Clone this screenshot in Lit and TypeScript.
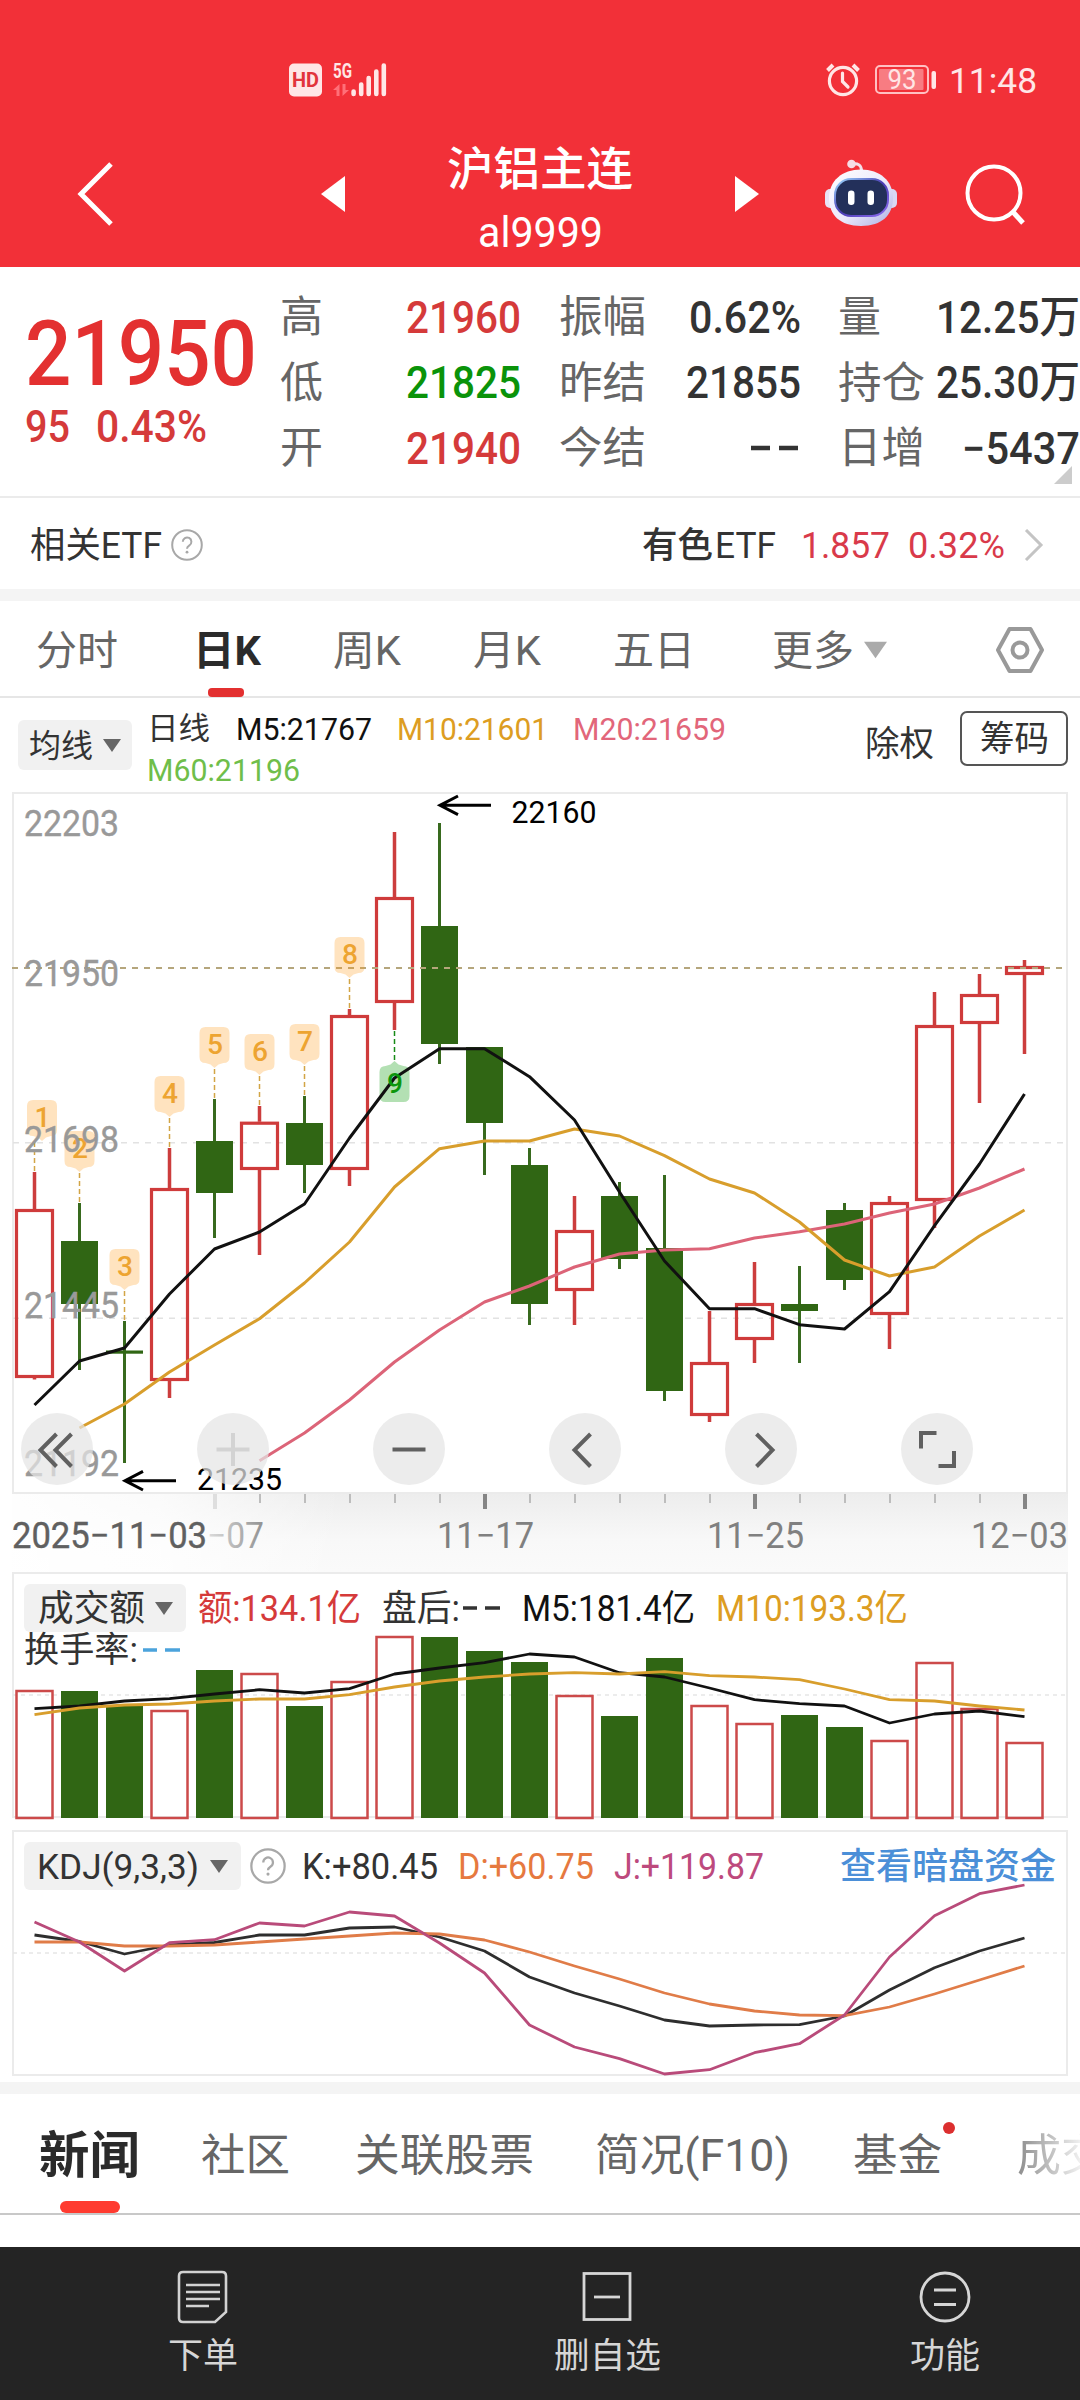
import { LitElement, html, svg, css } from "lit";
import { customElement } from "lit/decorators.js";

/** Fixed-width text run: real text squeezed or stretched to the width of the app's DIN-like face. */
const fit = (text: string, width: number, size: number, cls = "") => {
  const h = Math.round(size * 0.72);
  return html`<svg class="fit ${cls}" width=${width} height=${h} viewBox="0 0 ${width} ${h}">
    <text x="0" y=${h} font-size=${size} textLength=${width} lengthAdjust="spacingAndGlyphs" xml:space="preserve">${text}</text>
  </svg>`;
};

const label = (text: string, x: number, base: number, width: number, size: number, cls = "") => svg`
  <text class=${cls} x=${x} y=${base} font-size=${size} textLength=${width} lengthAdjust="spacingAndGlyphs">${text}</text>`;

const X0 = 34.5;
const STEP = 45;
const cx = (i: number) => X0 + STEP * i;
const line = (ys: number[], from = 0) => ys.map((y, i) => `${cx(i + from)},${y}`).join(" ");

// [direction, high, body top, body bottom, low] in canvas units
type Candle = [string, number, number, number, number];
const candles: Candle[] = [
  ["r", 1172, 1209, 1378, 1379.5], ["g", 1203, 1241, 1304, 1370], ["g", 1321, 1350.5, 1353.7, 1463],
  ["r", 1148, 1188, 1381, 1398], ["g", 1099, 1141, 1193, 1238], ["r", 1106, 1121.7, 1170, 1255],
  ["g", 1096, 1123, 1165, 1193], ["r", 1009, 1015, 1170, 1186], ["r", 832, 897, 1003, 1030],
  ["g", 823, 926, 1044, 1064], ["g", 1047, 1047, 1123, 1175], ["g", 1148, 1165, 1304, 1325],
  ["r", 1196, 1230, 1291, 1325], ["g", 1182, 1196, 1259, 1269], ["g", 1175, 1248, 1391, 1401],
  ["r", 1311, 1362, 1416, 1422], ["r", 1262, 1303, 1340, 1363], ["g", 1266, 1304, 1311, 1363],
  ["g", 1203, 1210, 1280, 1290], ["r", 1196, 1202, 1315, 1349], ["r", 992, 1025, 1201, 1228],
  ["r", 974, 994, 1024, 1103], ["r", 960, 966, 975, 1054],
];
const ma5 = [1405, 1361, 1348, 1294, 1249, 1232, 1204, 1138, 1078, 1048.7, 1048.7, 1076.7, 1120, 1192, 1261, 1308.7, 1308.7, 1324.7, 1329, 1291.7, 1225.7, 1164, 1094];
const ma10 = [1428, 1404, 1372, 1345, 1318.7, 1283, 1242, 1187, 1148.7, 1141, 1141, 1129, 1136, 1155.7, 1179, 1193, 1222, 1260, 1276, 1267, 1236, 1210];
const ma20 = [1460.7, 1433, 1400, 1362, 1330, 1302, 1286, 1267, 1254, 1250, 1248.7, 1238, 1231.7, 1224, 1213, 1204, 1188, 1169];

const volTops = [1690, 1691, 1705.5, 1710, 1670, 1673, 1706, 1681, 1636, 1637, 1651, 1662, 1695, 1716, 1658, 1705, 1723, 1715, 1727, 1740, 1662, 1708, 1742];
const vol5 = [1708.7, 1706, 1701, 1698.7, 1694, 1689.7, 1693, 1688.7, 1674, 1668, 1662.7, 1654, 1657, 1672.7, 1677, 1688, 1699.7, 1703.7, 1706, 1723, 1714, 1711, 1716.7];
const vol10 = [1714.7, 1708, 1705, 1704, 1701, 1699, 1699, 1694.7, 1687, 1681, 1677, 1674, 1672.7, 1674, 1671.7, 1675.7, 1677, 1679.7, 1689, 1699.7, 1701, 1706, 1710];

const kLine = [1935, 1941.5, 1954, 1945, 1942.5, 1935, 1935, 1928, 1927, 1937, 1951, 1977, 1993, 2006, 2020, 2026, 2025, 2024.7, 2016, 1990, 1967.7, 1951, 1938];
const dLine = [1942, 1942, 1946, 1946, 1945, 1942, 1939, 1936, 1933, 1934, 1940, 1952, 1966, 1979, 1993, 2004, 2011, 2015, 2015.7, 2007, 1994, 1980, 1966];
const jLine = [1922, 1942, 1971, 1942.7, 1939.7, 1923, 1926, 1912, 1916, 1943, 1973, 2025, 2047, 2058.7, 2074, 2069.7, 2052.7, 2043.7, 2015, 1957, 1915.7, 1893.7, 1885];

const caret = (w = 18, h = 13) => html`<svg class="caret" width=${w} height=${h} viewBox="0 0 18 13"><path d="M0 0H18L9 13Z" fill="currentColor" /></svg>`;
const help = (d: number) => html`<svg class="help" width=${d} height=${d} viewBox="0 0 32 32">
  <circle cx="16" cy="16" r="14.8" fill="none" stroke="#a8a8a8" stroke-width="2" />
  <path d="M11.8 12.8a4.3 4.3 0 1 1 6.6 3.6c-1.6 1-2.4 1.6-2.4 3.4" fill="none" stroke="#a8a8a8" stroke-width="2" />
  <circle cx="16" cy="23.2" r="1.4" fill="#a8a8a8" />
</svg>`;

const shared = css`
  :host { display: block; font-family: Roboto, "Noto Sans CJK SC", sans-serif; color: #333; }
  svg { display: block; flex: none; }
  .fit { overflow: visible; fill: currentColor; }
  .b { font-weight: 700; }
  .m { font-weight: 500; }
  .red { color: #d53a3a; }
  .green { color: #0a930a; }
  .gray { color: #666; }
  .black { color: #111; }
  .gold { color: #dd9d22; }
  .pink { color: #e2667a; }
  .lime { color: #6fbe4a; }
`;

@customElement("app-header")
class AppHeader extends LitElement {
  static styles = [shared, css`
    :host { background: #f23038; color: #fff; height: 267px; }
    .status { height: 160px; padding: 0 43px 0 289px; display: flex; align-items: center; color: #ffe6e6; box-sizing: border-box; }
    .spacer { flex: 1; }
    .signal { margin-left: 11px; overflow: visible; }
    .battery { margin: 0 13px 0 15px; }
    .nav { height: 107px; margin-top: -20px; display: grid; grid-template-columns: 77px 244px 103px 232px 79px 88px 141px auto; align-items: center; }
    .titles { display: flex; flex-direction: column; align-items: center; gap: 32px; padding-top: 12px; justify-self: center; }
    .back { grid-column: 2; }
  `];
  render() {
    return html`
      <div class="status">
        <svg width="33" height="34" viewBox="0 0 33 34">
          <rect x="0" y="0.5" width="33" height="33" rx="5" fill="#ffe6e6" />
          <text x="3" y="24" font-size="20" font-weight="700" fill="#e2343b" textLength="27" lengthAdjust="spacingAndGlyphs">HD</text>
        </svg>
        <svg class="signal" width="54" height="34" viewBox="333 63 54 34">
          <text x="333" y="77.5" font-size="20" font-weight="700" fill="#ffe6e6" textLength="19" lengthAdjust="spacingAndGlyphs">5G</text>
          <path d="M339.500 84V96H336.500V90H333ZM342.500 96V84H345.500V90H349Z" fill="#ff7078" />
          <g stroke="#ffe6e6" stroke-width="4.6" stroke-linecap="round">
            <path d="M353.600 91.500V94M361.200 84.500V94M368.700 78V94M376.300 71.500V94M383.800 65.500V94" />
          </g>
        </svg>
        <div class="spacer"></div>
        <svg width="34" height="34" viewBox="0 0 34 34" fill="none" stroke="#ffe6e6" stroke-width="3.2">
          <circle cx="17" cy="18" r="13.600" />
          <path d="M16.500 10V18.500L22 24" stroke-linecap="round" />
          <path d="M1.500 7.500 7 2M32.500 7.500 27 2" stroke-width="4" />
        </svg>
        <svg class="battery" width="61" height="30" viewBox="0 0 61 30">
          <rect x="1" y="1" width="52" height="27" rx="4" fill="none" stroke="#ffc0c2" stroke-width="2" />
          <rect x="4" y="4" width="44.500" height="21" rx="1" fill="#f87c82" />
          <rect x="56.500" y="6" width="4.500" height="18" rx="2" fill="#ffe6e6" />
          <text x="12.500" y="24.200" font-size="27" fill="#ffe6e6" textLength="29" lengthAdjust="spacingAndGlyphs">93</text>
        </svg>
        ${fit("11:48", 88, 35)}
      </div>
      <div class="nav">
        <svg class="back" width="36" height="64" viewBox="0 0 36 64"><path d="M34 2 4 32 34 62" fill="none" stroke="#fff" stroke-width="5" /></svg>
        <svg width="24" height="36" viewBox="0 0 24 36"><path d="M24 0V36L0 18Z" fill="#fff" /></svg>
        <div class="titles">${fit("沪铝主连", 186, 46, "m")}${fit("al9999", 125, 42)}</div>
        <div></div>
        <svg width="24" height="36" viewBox="0 0 24 36"><path d="M0 0V36L24 18Z" fill="#fff" /></svg>
        <svg width="76" height="70" viewBox="823 158 76 70">
          <defs>
            <linearGradient id="shell" x1="0" y1="0" x2="1" y2="1">
              <stop offset="0" stop-color="#fff" /><stop offset=".55" stop-color="#ece9fb" /><stop offset="1" stop-color="#aaaee4" />
            </linearGradient>
            <linearGradient id="rim" x1="0" y1="0" x2="1" y2="1">
              <stop offset="0" stop-color="#9fdcff" /><stop offset=".5" stop-color="#4a3cb4" /><stop offset="1" stop-color="#8d6cf0" />
            </linearGradient>
          </defs>
          <path d="M861.500 170C861.500 164 858 162 852 163" fill="none" stroke="#f3dfe9" stroke-width="3" />
          <circle cx="851.500" cy="163" r="4.300" fill="#f6dce5" />
          <rect x="825" y="188" width="12" height="19" rx="5" fill="#e9e2f5" />
          <rect x="885" y="188" width="12" height="19" rx="5" fill="#d9d8f3" />
          <path d="M861 168.500C880 168.500 893 180 893 197 893 214 882 225 861 225 840 225 829 214 829 197 829 180 842 168.500 861 168.500Z" fill="url(#shell)" />
          <rect x="835" y="178" width="53" height="37" rx="16" fill="#23305a" stroke="url(#rim)" stroke-width="2" />
          <rect x="848" y="189.500" width="6.500" height="14.500" rx="3.200" fill="#fff" />
          <rect x="867.500" y="189.500" width="6.500" height="14.500" rx="3.200" fill="#fff" />
        </svg>
        <svg width="62" height="62" viewBox="0 0 62 62" fill="none" stroke="#fff" stroke-width="4"><circle cx="30" cy="30" r="26.500" /><path d="M49 49 59 60" stroke-width="5" /></svg>
      </div>`;
  }
}

@customElement("quote-panel")
class QuotePanel extends LitElement {
  static styles = [shared, css`
    .quote { height: 231px; box-sizing: border-box; border-bottom: 2px solid #ebebeb; display: flex; position: relative; background: #fff; }
    .price { width: 280px; padding: 52px 0 0 25px; box-sizing: border-box; color: #e33030; }
    .change { display: flex; gap: 26px; padding-top: 25px; }
    .grid { padding-top: 17px; display: grid; grid-template-columns: 44px 197px 38px 88px 154px 37px 88px 154px; grid-auto-rows: 65.5px; align-items: center; }
    .v { justify-self: end; }
    .corner { position: absolute; right: 8px; bottom: 12px; }
    .etf { height: 91px; display: flex; align-items: center; padding: 2px 36px 0 30px; box-sizing: border-box; }
    .help { margin-left: 9px; }
    .spacer { flex: 1; }
    .name { display: flex; gap: 2px; }
    .n1 { margin: 0 19px 0 25px; display: flex; gap: 18px; color: #d93a4a; }
    .band { height: 12px; background: #f4f4f4; }
  `];
  render() {
    const c = (name: string, w: number) => fit(name, w, 43, "gray");
    const v = (t: string, w: number, cls = "") => html`<div class="v">${fit(t, w, 44, "m " + cls)}</div>`;
    const dash = html`<div class="v"><svg width="51" height="6" viewBox="0 0 51 6"><path d="M1 3H20M29 3H48" stroke="#333" stroke-width="4.500" /></svg></div>`;
    return html`
      <div class="quote">
        <div class="price">
          ${fit("21950", 232, 91, "m")}
          <div class="change">${fit("95", 45, 44, "m red")}${fit("0.43%", 111, 44, "m red")}</div>
        </div>
        <div class="grid">
          ${c("高", 43)}${v("21960", 115, "red")}<i></i>${c("振幅", 87)}${v("0.62%", 112)}<i></i>${c("量", 43)}${v("12.25万", 144)}
          ${c("低", 43)}${v("21825", 115, "green")}<i></i>${c("昨结", 87)}${v("21855", 115)}<i></i>${c("持仓", 87)}${v("25.30万", 144)}
          ${c("开", 43)}${v("21940", 115, "red")}<i></i>${c("今结", 87)}${dash}<i></i>${c("日增", 87)}${v("−5437", 118)}
        </div>
        <svg class="corner" width="18" height="18" viewBox="0 0 18 18"><path d="M18 0V18H0Z" fill="#ccc" /></svg>
      </div>
      <div class="etf">
        ${fit("相关ETF", 132, 36)}${help(32)}
        <div class="spacer"></div>
        <div class="name">${fit("有色", 71, 36, "m")}${fit("ETF", 61, 36)}</div>
        <div class="n1">${fit("1.857", 89, 36)}${fit("0.32%", 97, 36)}</div>
        <svg width="20" height="32" viewBox="0 0 20 32"><path d="M2 1 17 16 2 31" fill="none" stroke="#c4c4c4" stroke-width="3" /></svg>
      </div>
      <div class="band"></div>`;
  }
}

@customElement("period-tabs")
class PeriodTabs extends LitElement {
  static styles = [shared, css`
    .tabs { height: 97px; box-sizing: border-box; border-bottom: 2px solid #e6e6e6; padding-left: 36px; display: grid; align-items: center;
      grid-template-columns: 157px 140px 140px 140px 159px 92px 131px auto; color: #666; }
    .tab { height: 97px; display: flex; align-items: center; justify-content: flex-start; position: relative; }
    .active { color: #2b2b2b; }
    .active::after { content: ""; position: absolute; left: 15px; bottom: 1px; width: 36px; height: 9px; border-radius: 4px; background: #e33030; }
    .legend { height: 94px; display: flex; align-items: flex-start; padding-left: 18px; }
    .pick { width: 114px; height: 50px; margin-top: 22px; background: #f1f1f1; border-radius: 6px; display: flex; align-items: center; justify-content: center; gap: 10px; box-sizing: border-box; flex: none; }
    .caret { color: #666; }
    .down .caret { color: #aaa; }
    .values { width: 717px; padding: 19px 0 0 15px; box-sizing: border-box; display: flex; flex-wrap: wrap; gap: 18px 25px; align-content: flex-start; flex: none; }
    .ex { margin-top: 33px; width: 111px; padding-left: 16px; box-sizing: border-box; flex: none; }
    .chips { margin-top: 13px; width: 108px; height: 55px; box-sizing: border-box; border: 2px solid #555; border-radius: 7px; display: flex; align-items: center; justify-content: center; flex: none; }
    .first { margin-right: 1px; }
  `];
  render() {
    return html`
      <div class="tabs">
        <div class="tab">${fit("分时", 82, 41)}</div>
        <div class="tab active">${fit("日K", 68, 41, "b")}</div>
        <div class="tab">${fit("周K", 68, 41)}</div>
        <div class="tab">${fit("月K", 68, 41)}</div>
        <div class="tab">${fit("五日", 82, 41)}</div>
        <div class="tab">${fit("更多", 82, 41)}</div>
        <div class="down">${caret(23, 18)}</div>
        <svg width="50" height="48" viewBox="0 0 50 48" fill="none" stroke="#999" stroke-width="4" stroke-linejoin="round"><path d="M14.500 3H35.500L47 24 35.500 45H14.500L3 24Z" /><circle cx="25" cy="24" r="7.500" /></svg>
      </div>
      <div class="legend">
        <div class="pick">${fit("均线", 64, 32)}${caret()}</div>
        <div class="values">
          ${fit("日线", 63, 31, "first")}${fit("M5:21767", 136, 32, "black")}${fit("M10:21601", 151, 32, "gold")}${fit("M20:21659", 153, 32, "pink")}
          ${fit("M60:21196", 153, 32, "lime")}
        </div>
        <div class="ex">${fit("除权", 69, 35)}</div>
        <div class="chips">${fit("筹码", 69, 35)}</div>
      </div>`;
  }
}

@customElement("kline-chart")
class KlineChart extends LitElement {
  static styles = [shared, css`
    .wrap { position: relative; height: 780px; }
    .frame { fill: none; stroke: #ebebeb; stroke-width: 2; }
    .axis { fill: #999; stroke: #999; stroke-width: 0.4; }
    .note { fill: #000; }
    .date { fill: #808080; }
    .start { fill: #606060; stroke: #606060; stroke-width: 0.4; }
    .faded { fill: url(#fade); }
    .tagtxt { fill: #eda431; font-weight: 500; }
    .tagdown { fill: #0c960c; font-weight: 500; }
    .tools { position: absolute; left: 21px; top: 620.5px; display: flex; gap: 104px; }
    .tool { width: 72px; height: 72px; border-radius: 50%; background: rgba(229, 229, 229, 0.72); }
    .tool svg { fill: none; stroke: #606060; stroke-width: 4; }
    .off svg { stroke: #d3d3d3; }
  `];
  candle([dir, hi, top, bot, lo]: Candle, i: number) {
    const x = cx(i);
    if (dir === "g") {
      return svg`<path d="M${x} ${hi}V${lo}" stroke="#386a1e" stroke-width="3" /><rect x=${x - 18.500} y=${top} width="37" height=${bot - top} fill="#306614" />`;
    }
    return svg`<path d="M${x} ${hi}V${top}M${x} ${bot}V${lo}" stroke="#cc3d3d" stroke-width="3.500" />
      <rect x=${x - 18} y=${top + 1.5} width="36" height=${bot - top - 3} fill="none" stroke="#cf3b3b" stroke-width="3.200" />`;
  }
  tag(n: number) {
    const i = n - 1;
    const x = cx(i);
    const tx = n === 1 ? 42 : x;
    if (n === 9) {
      return svg`<path d="M${x} 1031V1061" stroke="#178a17" stroke-width="1.500" stroke-dasharray="5 3" />
        <path d="M${x - 9} 1066L${x - 4} 1064.500L${x} 1061L${x + 4} 1064.500L${x + 9} 1066q6 0 6 6v24q0 6-6 6h-18q-6 0-6-6v-24q0-6 6-6Z" fill="rgba(20,160,20,.32)" />`;
    }
    const t = candles[i][1] - 72;
    return svg`<path d="M${x} ${t + 42}V${t + 72}" stroke="#d2a545" stroke-width="1.500" stroke-dasharray="5 3" />
      <path d="M${tx - 9} ${t}h18q6 0 6 6v24q0 6-6 6l-5 1.500l-4 3.500l-4-3.500l-5-1.500q-6 0-6-6v-24q0-6 6-6Z" fill="rgba(255,150,20,.27)" />
      ${label(String(n), tx - 7.5, t + 27, 16, 28, "tagtxt")}`;
  }
  tool(path: string, off = false) {
    return html`<div class="tool ${off ? "off" : ""}"><svg width="72" height="72" viewBox="0 0 72 72"><path d=${path} /></svg></div>`;
  }
  render() {
    return html`<div class="wrap">
      <svg width="1080" height="780" viewBox="0 792 1080 780">
        <defs>
          <linearGradient id="strip" x1="0" y1="0" x2="0" y2="1"><stop offset="0" stop-color="#ededed" /><stop offset=".6" stop-color="#f8f8f8" /><stop offset="1" stop-color="#fafafa" /></linearGradient>
          <linearGradient id="veil"><stop offset="0" stop-color="#fff" stop-opacity=".95" /><stop offset=".45" stop-color="#fff" stop-opacity=".75" /><stop offset="1" stop-color="#fff" stop-opacity="0" /></linearGradient>
          <linearGradient id="fade" gradientUnits="userSpaceOnUse" x1="200" y1="0" x2="268" y2="0"><stop offset="0" stop-color="#e6e6e6" /><stop offset="1" stop-color="#8c8c8c" /></linearGradient>
        </defs>
        <rect x="12" y="1494" width="1056" height="78" fill="url(#strip)" />
        <rect x="12" y="1494" width="330" height="78" fill="url(#veil)" />
        <rect class="frame" x="13" y="793" width="1054" height="700" />
        <path d="M13 1142.700H1067M13 1318.300H1067" stroke="#e2e2e2" stroke-width="1.500" stroke-dasharray="6 6" />
        ${candles.map((c, i) => this.candle(c, i))}
        <path d="M12 968H1067" stroke="#b5a67c" stroke-width="2" stroke-dasharray="6 6" />
        ${[1, 2, 3, 4, 5, 6, 7, 8, 9].map((n) => this.tag(n))}
        <g fill="none" stroke-width="3" stroke-linejoin="round">
          <polyline points=${line(ma20, 5)} stroke="#dc6478" />
          <polyline points=${line(ma10, 1)} stroke="#d89e2c" />
          <polyline points=${line(ma5)} stroke="#111" />
        </g>
        ${label("9", cx(8) - 7.5, 1093, 16, 28, "tagdown")}
        ${label("22203", 24, 835.5, 95, 37, "axis")}
        ${label("21950", 24, 985.5, 95, 37, "axis")}
        ${label("21698", 24, 1151.5, 95, 37, "axis")}
        ${label("21445", 24, 1318, 95, 37, "axis")}
        ${label("21192", 24, 1476, 95, 37, "axis")}
        <path d="M491 805.300H440M458 796 440 805.300 458 814.600M176 1480.700H125M143 1471.400 125 1480.700 143 1490" fill="none" stroke="#000" stroke-width="3" />
        ${label("22160", 511.5, 823, 85, 31, "note")}
        ${label("21235", 197, 1490, 85, 31, "note")}
        ${candles.map((_, i) => i < 4 ? "" : (i - 4) % 6 === 0
          ? svg`<path d="M${cx(i) + 0.5} 1494V1509" stroke=${i === 4 ? "#dedede" : "#858585"} stroke-width="4" />`
          : svg`<path d="M${cx(i) + 0.5} 1494V1503" stroke="#bdbdbd" stroke-width="2" />`)}
        ${label("2025−11−03", 12, 1547.5, 195, 36.5, "start")}
        ${label("−07", 207, 1547.5, 57, 36.5, "faded")}
        ${label("11−17", 437, 1547.5, 97, 36.5, "date")}
        ${label("11−25", 707, 1547.5, 97, 36.5, "date")}
        ${label("12−03", 971, 1547.5, 97, 36.5, "date")}
      </svg>
      <div class="tools">
        ${this.tool("M35.500 21 19.500 37 35.500 53.500M50.500 21 34.500 37 50.500 53.500")}
        ${this.tool("M19.500 36.500H52.500M36 20V53", true)}
        ${this.tool("M19.500 36.500H52.500")}
        ${this.tool("M41.500 21 25.500 37 41.500 53.500")}
        ${this.tool("M31.500 21 47.500 37 31.500 53.500")}
        ${this.tool("M20 35.500V20H35.500M37.500 53H53V38")}
      </div>
    </div>`;
  }
}

@customElement("volume-chart")
class VolumeChart extends LitElement {
  static styles = [shared, css`
    .wrap { position: relative; height: 258px; }
    .row { position: absolute; left: 24px; top: 12px; height: 48px; display: flex; align-items: center; }
    .pick { width: 162px; height: 48px; background: #f1f1f1; border-radius: 6px; display: flex; align-items: center; justify-content: center; gap: 10px; margin-right: 12px; }
    .caret { color: #666; }
    .gap { width: 21px; }
    .second { position: absolute; left: 24px; top: 65px; display: flex; align-items: center; gap: 2px; }
    .dash { margin-left: 3px; }
  `];
  render() {
    const dash = (color: string) => html`<svg class="dash" width="38" height="6" viewBox="0 0 38 6"><path d="M0 3H14M22 3H37" stroke=${color} stroke-width="3.500" /></svg>`;
    return html`<div class="wrap">
      <svg width="1080" height="258" viewBox="0 1572 1080 258">
        <rect x="13" y="1573" width="1054" height="244" fill="none" stroke="#ebebeb" stroke-width="2" />
        <path d="M13 1695H1067" stroke="#e6e6e6" stroke-width="1.500" stroke-dasharray="4 4" />
        ${volTops.map((t, i) => candles[i][0] === "g"
          ? svg`<rect x=${cx(i) - 18.5} y=${t} width="37" height=${1818 - t} fill="#306614" />`
          : svg`<rect x=${cx(i) - 18} y=${t + 1} width="36" height=${1817 - t} fill="none" stroke="#cc4a4a" stroke-width="2.500" />`)}
        <g fill="none" stroke-width="2.800" stroke-linejoin="round">
          <polyline points=${line(vol5)} stroke="#111" />
          <polyline points=${line(vol10)} stroke="#d89e2c" />
        </g>
      </svg>
      <div class="row">
        <div class="pick">${fit("成交额", 107, 36)}${caret()}</div>
        ${fit("额:134.1亿", 163, 36, "red")}<div class="gap"></div>
        ${fit("盘后:", 78, 36)}${dash("#333")}<div class="gap"></div>
        ${fit("M5:181.4亿", 173, 36, "black")}<div class="gap"></div>
        ${fit("M10:193.3亿", 192, 36, "gold")}
      </div>
      <div class="second">${fit("换手率:", 114, 35)}${dash("#4ba3dc")}</div>
    </div>`;
  }
}

@customElement("kdj-chart")
class KdjChart extends LitElement {
  static styles = [shared, css`
    .wrap { position: relative; height: 252px; }
    .row { position: absolute; left: 24px; right: 24px; top: 12px; height: 48px; display: flex; align-items: center; }
    .pick { width: 217px; height: 48px; background: #f1f1f1; border-radius: 6px; display: flex; align-items: center; justify-content: center; gap: 11px; margin-right: 9px; }
    .caret { color: #666; }
    .vals { display: flex; gap: 20px; margin-left: 16px; flex: 1; }
    .orange { color: #e6793f; }
    .mag { color: #bd4a7d; }
    .link { color: #4b8fd8; }
  `];
  render() {
    return html`<div class="wrap">
      <svg width="1080" height="252" viewBox="0 1830 1080 252">
        <rect x="13" y="1831" width="1054" height="244" fill="none" stroke="#ebebeb" stroke-width="2" />
        <path d="M13 1953H1067" stroke="#e6e6e6" stroke-width="1.500" stroke-dasharray="4 4" />
        <g fill="none" stroke-width="2.800" stroke-linejoin="round">
          <polyline points=${line(kLine)} stroke="#2e2e2e" />
          <polyline points=${line(dLine)} stroke="#e07c48" />
          <polyline points=${line(jLine)} stroke="#b94b7a" />
        </g>
      </svg>
      <div class="row">
        <div class="pick">${fit("KDJ(9,3,3)", 162, 35)}${caret()}</div>
        ${help(36)}
        <div class="vals">
          ${fit("K:+80.45", 136, 36)}${fit("D:+60.75", 136, 36, "orange")}${fit("J:+119.87", 150, 36, "mag")}
        </div>
        ${fit("查看暗盘资金", 216, 36, "link m")}
      </div>
    </div>`;
  }
}

@customElement("content-tabs")
class ContentTabs extends LitElement {
  static styles = [shared, css`
    .band { height: 12px; background: #f4f4f4; }
    .tabs { height: 121px; box-sizing: border-box; border-bottom: 2px solid #c8c8c8; display: grid; padding-left: 39px; overflow: hidden;
      grid-template-columns: 162px 154px 240px 258px 164px 63px; color: #666; }
    .tab { position: relative; display: flex; align-items: center; height: 122px; }
    .active { color: #2b2b2b; }
    .active::after { content: ""; position: absolute; left: 21px; bottom: 3px; width: 60px; height: 12px; border-radius: 6px; background: #ff3b30; }
    .dot { position: absolute; left: 90px; top: 28px; width: 12px; height: 12px; border-radius: 50%; background: #dc2f2f; }
    .last { overflow: hidden; -webkit-mask-image: linear-gradient(90deg, rgba(0,0,0,.75), rgba(0,0,0,.1)); mask-image: linear-gradient(90deg, rgba(0,0,0,.75), rgba(0,0,0,.1)); }
  `];
  render() {
    return html`
      <div class="band"></div>
      <div class="tabs">
        <div class="tab active">${fit("新闻", 101, 50, "b")}</div>
        <div class="tab">${fit("社区", 89, 44)}</div>
        <div class="tab">${fit("关联股票", 179, 44)}</div>
        <div class="tab">${fit("简况(F10)", 195, 44)}</div>
        <div class="tab">${fit("基金", 89, 44)}<div class="dot"></div></div>
        <div class="tab last">${fit("成交", 88, 44)}</div>
      </div>`;
  }
}

@customElement("bottom-bar")
class BottomBar extends LitElement {
  static styles = [shared, css`
    .bar { height: 153px; margin-top: 32px; background: #242424; color: #d6d6d6; display: grid; grid-template-columns: 405px 404px 271px; }
    .item { display: flex; flex-direction: column; align-items: center; padding-top: 23px; gap: 19px; }
    .item svg { fill: none; }
    .item .fit { fill: currentColor; }
  `];
  render() {
    return html`<div class="bar">
      <div class="item">
        <svg width="54" height="54" viewBox="0 0 54 54" stroke="#d2d2d2" stroke-width="2.600"><path d="M7 2H46Q50 2 50 6V42L39 52H7Q3 52 3 48V6Q3 2 7 2Z" /><path d="M10 15H44M10 22H44M10 29H44M10 36H33" /></svg>
        ${fit("下单", 70, 35)}
      </div>
      <div class="item">
        <svg width="54" height="54" viewBox="0 0 54 54" stroke="#d6d6d6" stroke-width="2.800"><rect x="4" y="3.500" width="46" height="46" /><path d="M14 27H40" /></svg>
        ${fit("删自选", 107, 35)}
      </div>
      <div class="item">
        <svg width="54" height="54" viewBox="0 0 54 54" stroke="#d6d6d6" stroke-width="2.800"><circle cx="27" cy="27" r="24" /><path d="M16 20H38M16 34.500H38" /></svg>
        ${fit("功能", 70, 35)}
      </div>
    </div>`;
  }
}

@customElement("app-root")
class AppRoot extends LitElement {
  static styles = css`
    :host { display: block; width: 1080px; height: 2400px; overflow: hidden; background: #fff; }
    .page { display: flex; flex-direction: column; }
  `;
  render() {
    return html`<div class="page">
      <app-header></app-header>
      <quote-panel></quote-panel>
      <period-tabs></period-tabs>
      <kline-chart></kline-chart>
      <volume-chart></volume-chart>
      <kdj-chart></kdj-chart>
      <content-tabs></content-tabs>
      <bottom-bar></bottom-bar>
    </div>`;
  }
}
